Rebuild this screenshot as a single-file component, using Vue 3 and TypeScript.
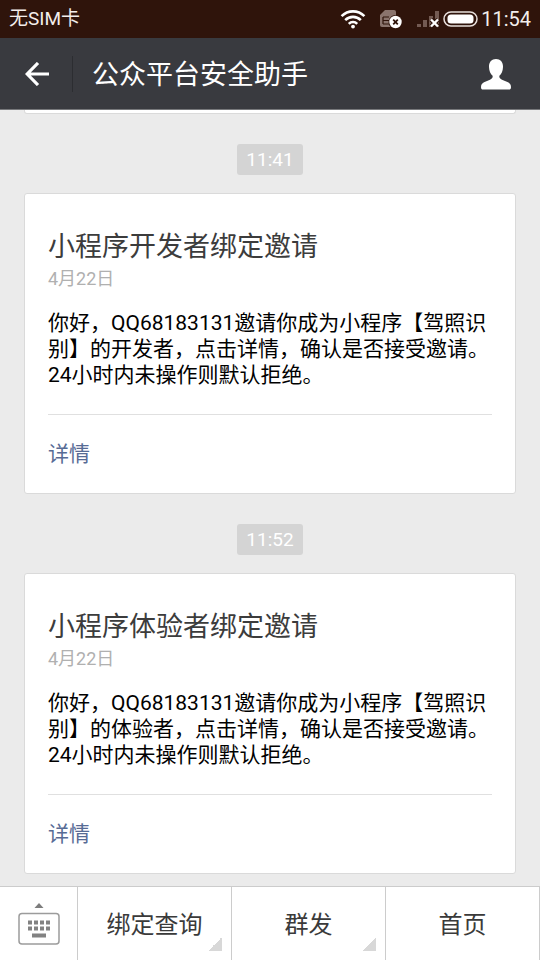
<script setup lang="ts">
interface Message {
  id: number
  time: string
  title: string
  date: string
  body: string
}

interface MenuItem {
  label: string
  hasSubmenu: boolean
}

const messages: Message[] = [
  {
    id: 1,
    time: '11:41',
    title: '小程序开发者绑定邀请',
    date: '4月22日',
    body: '你好，QQ68183131邀请你成为小程序【驾照识别】的开发者，点击详情，确认是否接受邀请。24小时内未操作则默认拒绝。',
  },
  {
    id: 2,
    time: '11:52',
    title: '小程序体验者绑定邀请',
    date: '4月22日',
    body: '你好，QQ68183131邀请你成为小程序【驾照识别】的体验者，点击详情，确认是否接受邀请。24小时内未操作则默认拒绝。',
  },
]

const menu: MenuItem[] = [
  { label: '绑定查询', hasSubmenu: true },
  { label: '群发', hasSubmenu: true },
  { label: '首页', hasSubmenu: false },
]
</script>

<template>
  <div class="screen">
    <div class="status">
      <span class="carrier">无SIM卡</span>
      <svg class="wifi" width="26" height="20" viewBox="0 0 26 20" fill="none" stroke="#fff" stroke-width="2.6">
        <path d="M1.6 7.2C8 .7 18 .7 24.4 7.2" />
        <path d="M5.2 11.2C9.6 6.8 16.4 6.8 20.8 11.2" />
        <path d="M8.8 14.8C11.2 12.4 14.8 12.4 17.2 14.8" />
        <circle cx="13" cy="17.6" r="1.9" fill="#fff" stroke="none" />
      </svg>
      <svg class="sim" width="22" height="20" viewBox="0 0 22 20">
        <path d="M5 1h9q2 0 2 2v15H2q-2 0-2-2V6z" fill="#8a746d" />
        <path d="M3 8h6M3 11.500h6M3 15h6M3 8v7" stroke="#2f140b" stroke-width="1.200" fill="none" />
        <circle cx="15.500" cy="13" r="7" fill="#2f140b" />
        <circle cx="15.500" cy="13" r="6.200" fill="#fff" />
        <path d="M13.200 10.700l4.600 4.600M17.800 10.700l-4.600 4.600" stroke="#2f140b" stroke-width="1.800" />
      </svg>
      <svg class="signal" width="23" height="20" viewBox="0 0 23 20">
        <path d="M0 15h4v3H0zM6 11h4v7H6zM12 7h4v11h-4zM18 2h4v16h-4z" fill="#735a52" />
        <path d="M14 10.500l7 7M21 10.500l-7 7" stroke="#2f140b" stroke-width="4.500" />
        <path d="M14 10.500l7 7M21 10.500l-7 7" stroke="#fff" stroke-width="2.400" />
      </svg>
      <svg class="battery" width="35" height="16" viewBox="0 0 35 16">
        <rect x="1" y="1" width="33" height="14" rx="7" fill="none" stroke="#e8dfdc" stroke-width="1.500" />
        <rect x="4.500" y="3.500" width="26" height="9" rx="3.500" fill="#fff" />
      </svg>
      <span class="clock">11:54</span>
    </div>

    <header class="bar">
      <button class="back" type="button" aria-label="返回">
        <svg width="24" height="24" viewBox="0 0 24 24" fill="none" stroke="#fff" stroke-width="3.200">
          <path d="M13 1L2.200 12 13 23M2.200 12H24" />
        </svg>
      </button>
      <h1>公众平台安全助手</h1>
      <button class="profile" type="button" aria-label="账号资料">
        <svg width="32" height="32" viewBox="0 0 32 32" fill="#fff">
          <path d="M16 1C11.500 1 8.800 4.200 9 9c.1 4 1.500 6.900 3.600 8.800.4 2-.6 3-2.600 3.900l-6 2.600C1.900 25.300 1 27 1 29.200 1 30.900 1.700 31.500 3 31.500h26c1.300 0 2-.6 2-2.300 0-2.200-.9-3.900-3-4.900l-6-2.600c-2-.9-3-1.900-2.600-3.900C21.500 15.900 22.900 13 23 9c.2-4.800-2.500-8-7-8z" />
        </svg>
      </button>
    </header>

    <main class="chat">
      <div class="card tail"></div>
      <template v-for="message in messages" :key="message.id">
        <time class="stamp">{{ message.time }}</time>
        <article class="card">
          <h2>{{ message.title }}</h2>
          <p class="date">{{ message.date }}</p>
          <p class="body">{{ message.body }}</p>
          <a class="detail" href="#">详情</a>
        </article>
      </template>
    </main>

    <nav class="menu">
      <button class="keyboard" type="button" aria-label="切换键盘">
        <svg width="42" height="42" viewBox="0 0 42 42">
          <path d="M16.500 5l4.500-5 4.500 5z" fill="#7d7d7d" />
          <rect x="1" y="10.500" width="40" height="30.500" rx="3" fill="none" stroke="#9c9c9c" stroke-width="1.500" />
          <path
            d="M10 17.500h4v4h-4zM16 17.500h4v4h-4zM22 17.500h4v4h-4zM28 17.500h4v4h-4zM10 23.500h4v4h-4zM16 23.500h4v4h-4zM22 23.500h4v4h-4zM28 23.500h4v4h-4zM14 30.500h14v4H14z"
            fill="#828282"
          />
        </svg>
      </button>
      <button v-for="item in menu" :key="item.label" class="item" type="button">
        {{ item.label }}
        <span v-if="item.hasSubmenu" class="corner"></span>
      </button>
    </nav>
  </div>
</template>

<style>
body {
  margin: 0;
  background: #ebebeb;
}
</style>

<style scoped>
.screen {
  display: flex;
  flex-direction: column;
  height: 100vh;
  overflow: hidden;
  background: #ebebeb;
  font-family: Roboto, "Noto Sans CJK SC", sans-serif;
}

button {
  margin: 0;
  padding: 0;
  border: 0;
  background: none;
  font: inherit;
  color: inherit;
}

svg {
  display: block;
  flex: none;
}

h1,
h2,
p {
  margin: 0;
  font-weight: 400;
}

.status {
  display: flex;
  flex: none;
  align-items: center;
  height: 38px;
  padding: 0 9px;
  background: #2f140b;
  color: #f3eeec;
}

.carrier {
  flex: 1;
  font-size: 19px;
  line-height: 38px;
}

.wifi {
  margin-right: 14px;
}

.sim {
  margin-right: 15px;
}

.signal {
  margin-right: 3px;
}

.battery {
  margin-right: 3px;
}

.clock {
  font-size: 20px;
  line-height: 38px;
}

.bar {
  display: flex;
  flex: none;
  align-items: center;
  box-sizing: border-box;
  height: 72px;
  border-bottom: 1px solid #77787b;
  background: #393a3f;
  color: #fff;
}

.back {
  display: flex;
  align-items: center;
  box-sizing: border-box;
  width: 73px;
  height: 36px;
  padding-left: 25px;
  border-right: 1px solid #2c2d31;
}

h1 {
  flex: 1;
  padding: 2px 0 0 19px;
  font-size: 27px;
  line-height: 36px;
}

.profile {
  margin-right: 28px;
}

.chat {
  display: flex;
  flex: 1;
  flex-direction: column;
  min-height: 0;
  overflow: hidden;
  padding: 0 24px;
}

.card {
  flex: none;
  box-sizing: border-box;
  padding: 35px 23px 0;
  border: 1px solid #dadada;
  border-radius: 3px;
  background: #fff;
}

.tail {
  height: 4px;
  padding: 0;
  border-top: 0;
  border-radius: 0 0 3px 3px;
}

.stamp {
  align-self: center;
  flex: none;
  margin: 30px 0 18px;
  padding: 0 9px;
  border-radius: 3px;
  background: #d4d4d4;
  color: #fff;
  font-size: 19px;
  line-height: 31px;
}

h2 {
  color: #3c3c3c;
  font-size: 27px;
  line-height: 36px;
}

.date {
  margin-top: 2px;
  color: #b0b0b0;
  font-size: 18px;
  line-height: 24px;
}

.body {
  margin-top: 19px;
  color: #000;
  font-size: 21px;
  line-height: 26px;
}

.detail {
  display: block;
  margin-top: 26px;
  border-top: 1px solid #e0e0e0;
  color: #576b95;
  font-size: 21px;
  line-height: 78px;
  text-decoration: none;
}

.menu {
  display: grid;
  flex: none;
  grid-template-columns: 78px repeat(3, 1fr);
  box-sizing: border-box;
  height: 74px;
  border-top: 1px solid #cccccc;
  background: #fff;
}

.keyboard,
.item {
  border-right: 1px solid #cccccc;
}

.keyboard {
  display: flex;
  align-items: center;
  justify-content: center;
}

.item {
  position: relative;
  padding-top: 3px;
  color: #3a3a3a;
  font-size: 24px;
  line-height: 70px;
}

.corner {
  position: absolute;
  right: 9px;
  bottom: 9px;
  width: 14px;
  height: 14px;
  background: linear-gradient(135deg, transparent 50%, #d8d8d8 50%);
}
</style>
